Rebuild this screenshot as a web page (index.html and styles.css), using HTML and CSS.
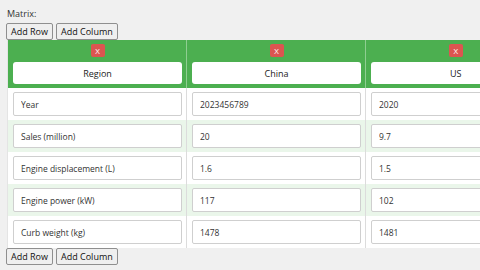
FILE: index.html
```html
<!DOCTYPE html>
<html lang="en">
<head>
    <meta charset="UTF-8">
    <title>Matrix</title>
    <link rel="stylesheet" href="styles.css">
</head>
<body>
    <div class="matrix-field">
        <div class="matrix-label">Matrix:</div>
        <div class="toolbar">
            <button class="tool-btn">Add Row</button>
            <button class="tool-btn">Add Column</button>
        </div>
        <div class="table-wrap">
            <table class="matrix-table">
                <thead>
                    <tr>
                        <th><button class="remove">X</button><input class="head-input" type="text" value="Region"></th>
                        <th><button class="remove">X</button><input class="head-input" type="text" value="China"></th>
                        <th><button class="remove">X</button><input class="head-input" type="text" value="US"></th>
                    </tr>
                </thead>
                <tbody>
                    <tr>
                        <td><input class="cell-input" type="text" value="Year"></td>
                        <td><input class="cell-input" type="text" value="2023456789"></td>
                        <td><input class="cell-input" type="text" value="2020"></td>
                    </tr>
                    <tr>
                        <td><input class="cell-input" type="text" value="Sales (million)"></td>
                        <td><input class="cell-input" type="text" value="20"></td>
                        <td><input class="cell-input" type="text" value="9.7"></td>
                    </tr>
                    <tr>
                        <td><input class="cell-input" type="text" value="Engine displacement (L)"></td>
                        <td><input class="cell-input" type="text" value="1.6"></td>
                        <td><input class="cell-input" type="text" value="1.5"></td>
                    </tr>
                    <tr>
                        <td><input class="cell-input" type="text" value="Engine power (kW)"></td>
                        <td><input class="cell-input" type="text" value="117"></td>
                        <td><input class="cell-input" type="text" value="102"></td>
                    </tr>
                    <tr>
                        <td><input class="cell-input" type="text" value="Curb weight (kg)"></td>
                        <td><input class="cell-input" type="text" value="1478"></td>
                        <td><input class="cell-input" type="text" value="1481"></td>
                    </tr>
                </tbody>
            </table>
        </div>
        <div class="toolbar">
            <button class="tool-btn">Add Row</button>
            <button class="tool-btn">Add Column</button>
        </div>
    </div>
</body>
</html>
```

FILE: styles.css
```css
body {
    margin: 0;
    background-color: #f0f0f0;
    font-family: "Open Sans", Arial, sans-serif;
    color: #333;
    overflow: hidden;
}
.matrix-field {
    padding: 8px 0 0 6px;
}
.matrix-label {
    font-size: 9px;
    line-height: 12px;
    margin: 0 0 3px 1px;
}
.toolbar {
    display: flex;
    gap: 3px;
}
.tool-btn {
    font-family: "Open Sans", Arial, sans-serif;
    font-size: 9px;
    line-height: 13px;
    color: #111;
    background-color: #efefef;
    border: 1px solid #8f8f8f;
    border-radius: 2px;
    padding: 1px 4px;
    margin: 0;
}
.table-wrap {
    overflow: hidden;
    margin-left: 1px;
}
.matrix-table {
    border-collapse: collapse;
    table-layout: fixed;
    width: 537px;
    background-color: #fff;
}
.matrix-table th,
.matrix-table td {
    width: 179px;
    padding: 4px 4px 4px 5px;
    border-left: 1px solid #dcdcdc;
    box-sizing: border-box;
}
.matrix-table th {
    background-color: #4caf50;
    border-left-color: #8fce91;
    text-align: center;
}
.matrix-table th:first-child,
.matrix-table td:first-child {
    border-left-color: #e4e4e4;
}
.matrix-table tbody tr:nth-child(even) td {
    background-color: #eaf6ea;
}
.remove {
    display: block;
    margin: 0 auto 5px;
    width: 14px;
    height: 13px;
    padding: 0;
    border: none;
    border-radius: 2px;
    background-color: #dc5550;
    color: #fff;
    font-family: "Open Sans", Arial, sans-serif;
    font-size: 8px;
    line-height: 13px;
}
.head-input,
.cell-input {
    display: block;
    width: 100%;
    box-sizing: border-box;
    margin: 0;
    font-family: "Open Sans", Arial, sans-serif;
    font-size: 8.5px;
    color: #333;
    background-color: #fff;
}
.head-input {
    height: 22px;
    border: none;
    border-radius: 3px;
    text-align: center;
    color: #222;
    font-size: 9px;
}
.cell-input {
    height: 24px;
    border: 1px solid #cfcfcf;
    border-radius: 2px;
    padding: 0 7px;
}
```
